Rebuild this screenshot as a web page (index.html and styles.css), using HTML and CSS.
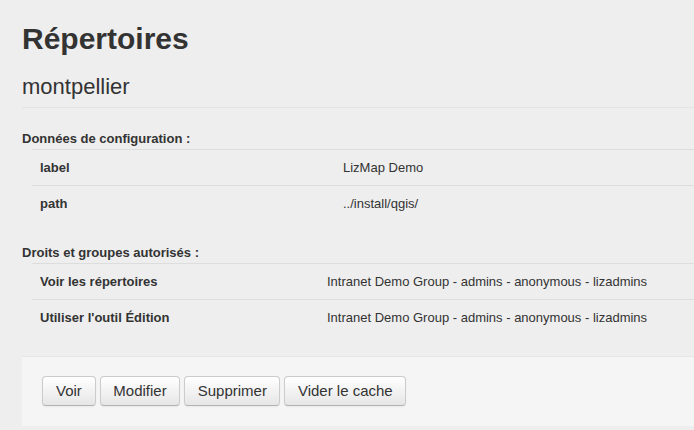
FILE: index.html
```html
<!DOCTYPE html>
<html lang="fr">
<head>
<meta charset="utf-8">
<title>Répertoires</title>
<link rel="stylesheet" href="styles.css">
</head>
<body>
<div class="page">
  <h1 class="title">Répertoires</h1>
  <h2 class="subtitle">montpellier</h2>

  <div class="section-label">Données de configuration :</div>
  <table class="props props-config">
    <tr><th>label</th><td>LizMap Demo</td></tr>
    <tr><th>path</th><td>../install/qgis/</td></tr>
  </table>

  <div class="section-label section-label-second">Droits et groupes autorisés :</div>
  <table class="props props-rights">
    <tr><th>Voir les répertoires</th><td>Intranet Demo Group - admins - anonymous - lizadmins</td></tr>
    <tr><th>Utiliser l'outil Édition</th><td>Intranet Demo Group - admins - anonymous - lizadmins</td></tr>
  </table>

  <div class="form-actions">
    <button class="btn btn-short">Voir</button>
    <button class="btn">Modifier</button>
    <button class="btn">Supprimer</button>
    <button class="btn">Vider le cache</button>
  </div>
</div>
</body>
</html>
```

FILE: styles.css
```css
html, body {
  margin: 0;
  padding: 0;
  background: #eeeeee;
  overflow: hidden;
}

body {
  font-family: "Liberation Sans", Arial, sans-serif;
  color: #333333;
  font-size: 13px;
  line-height: 20px;
}

.page {
  padding: 19px 0 0 22px;
}

.title {
  margin: 0;
  font-size: 30px;
  line-height: 40px;
  font-weight: bold;
  color: #333333;
}

.subtitle {
  margin: 13px 0 0 0;
  font-size: 22px;
  line-height: 30px;
  font-weight: normal;
  color: #333333;
  padding-bottom: 5px;
  border-bottom: 1px solid #e3e3e3;
}

.section-label {
  margin-top: 21px;
  font-weight: bold;
  font-size: 13px;
  line-height: 20px;
}

.section-label-second {
  margin-top: 22px;
}

.props {
  margin-left: 10px;
  width: calc(100% - 10px);
  border-collapse: separate;
  border-spacing: 0;
  table-layout: fixed;
}

.props th,
.props td {
  padding: 8px 8px 7px;
  line-height: 20px;
  text-align: left;
  vertical-align: top;
  border-top: 1px solid #dddddd;
  font-size: 13px;
}

.props th {
  font-weight: bold;
}

.props td {
  font-weight: normal;
}

.props-config th {
  width: 287px;
}

.props-rights th {
  width: 271px;
}

.form-actions {
  margin-top: 21px;
  padding: 19px 20px 20px;
  background: #f5f5f5;
  border-top: 1px solid #e5e5e5;
  display: flex;
  gap: 4px;
}

.btn {
  font-family: "Liberation Sans", Arial, sans-serif;
  font-size: 15px;
  line-height: 20px;
  padding: 4px 12.5px;
  color: #333333;
  background-color: #f5f5f5;
  background-image: linear-gradient(to bottom, #ffffff, #e6e6e6);
  border: 1px solid #cccccc;
  border-bottom-color: #b3b3b3;
  border-radius: 4px;
  box-shadow: inset 0 1px 0 rgba(255, 255, 255, 0.2), 0 1px 2px rgba(0, 0, 0, 0.05);
  cursor: pointer;
}

.btn-short {
  padding: 4px 13px;
}
```
